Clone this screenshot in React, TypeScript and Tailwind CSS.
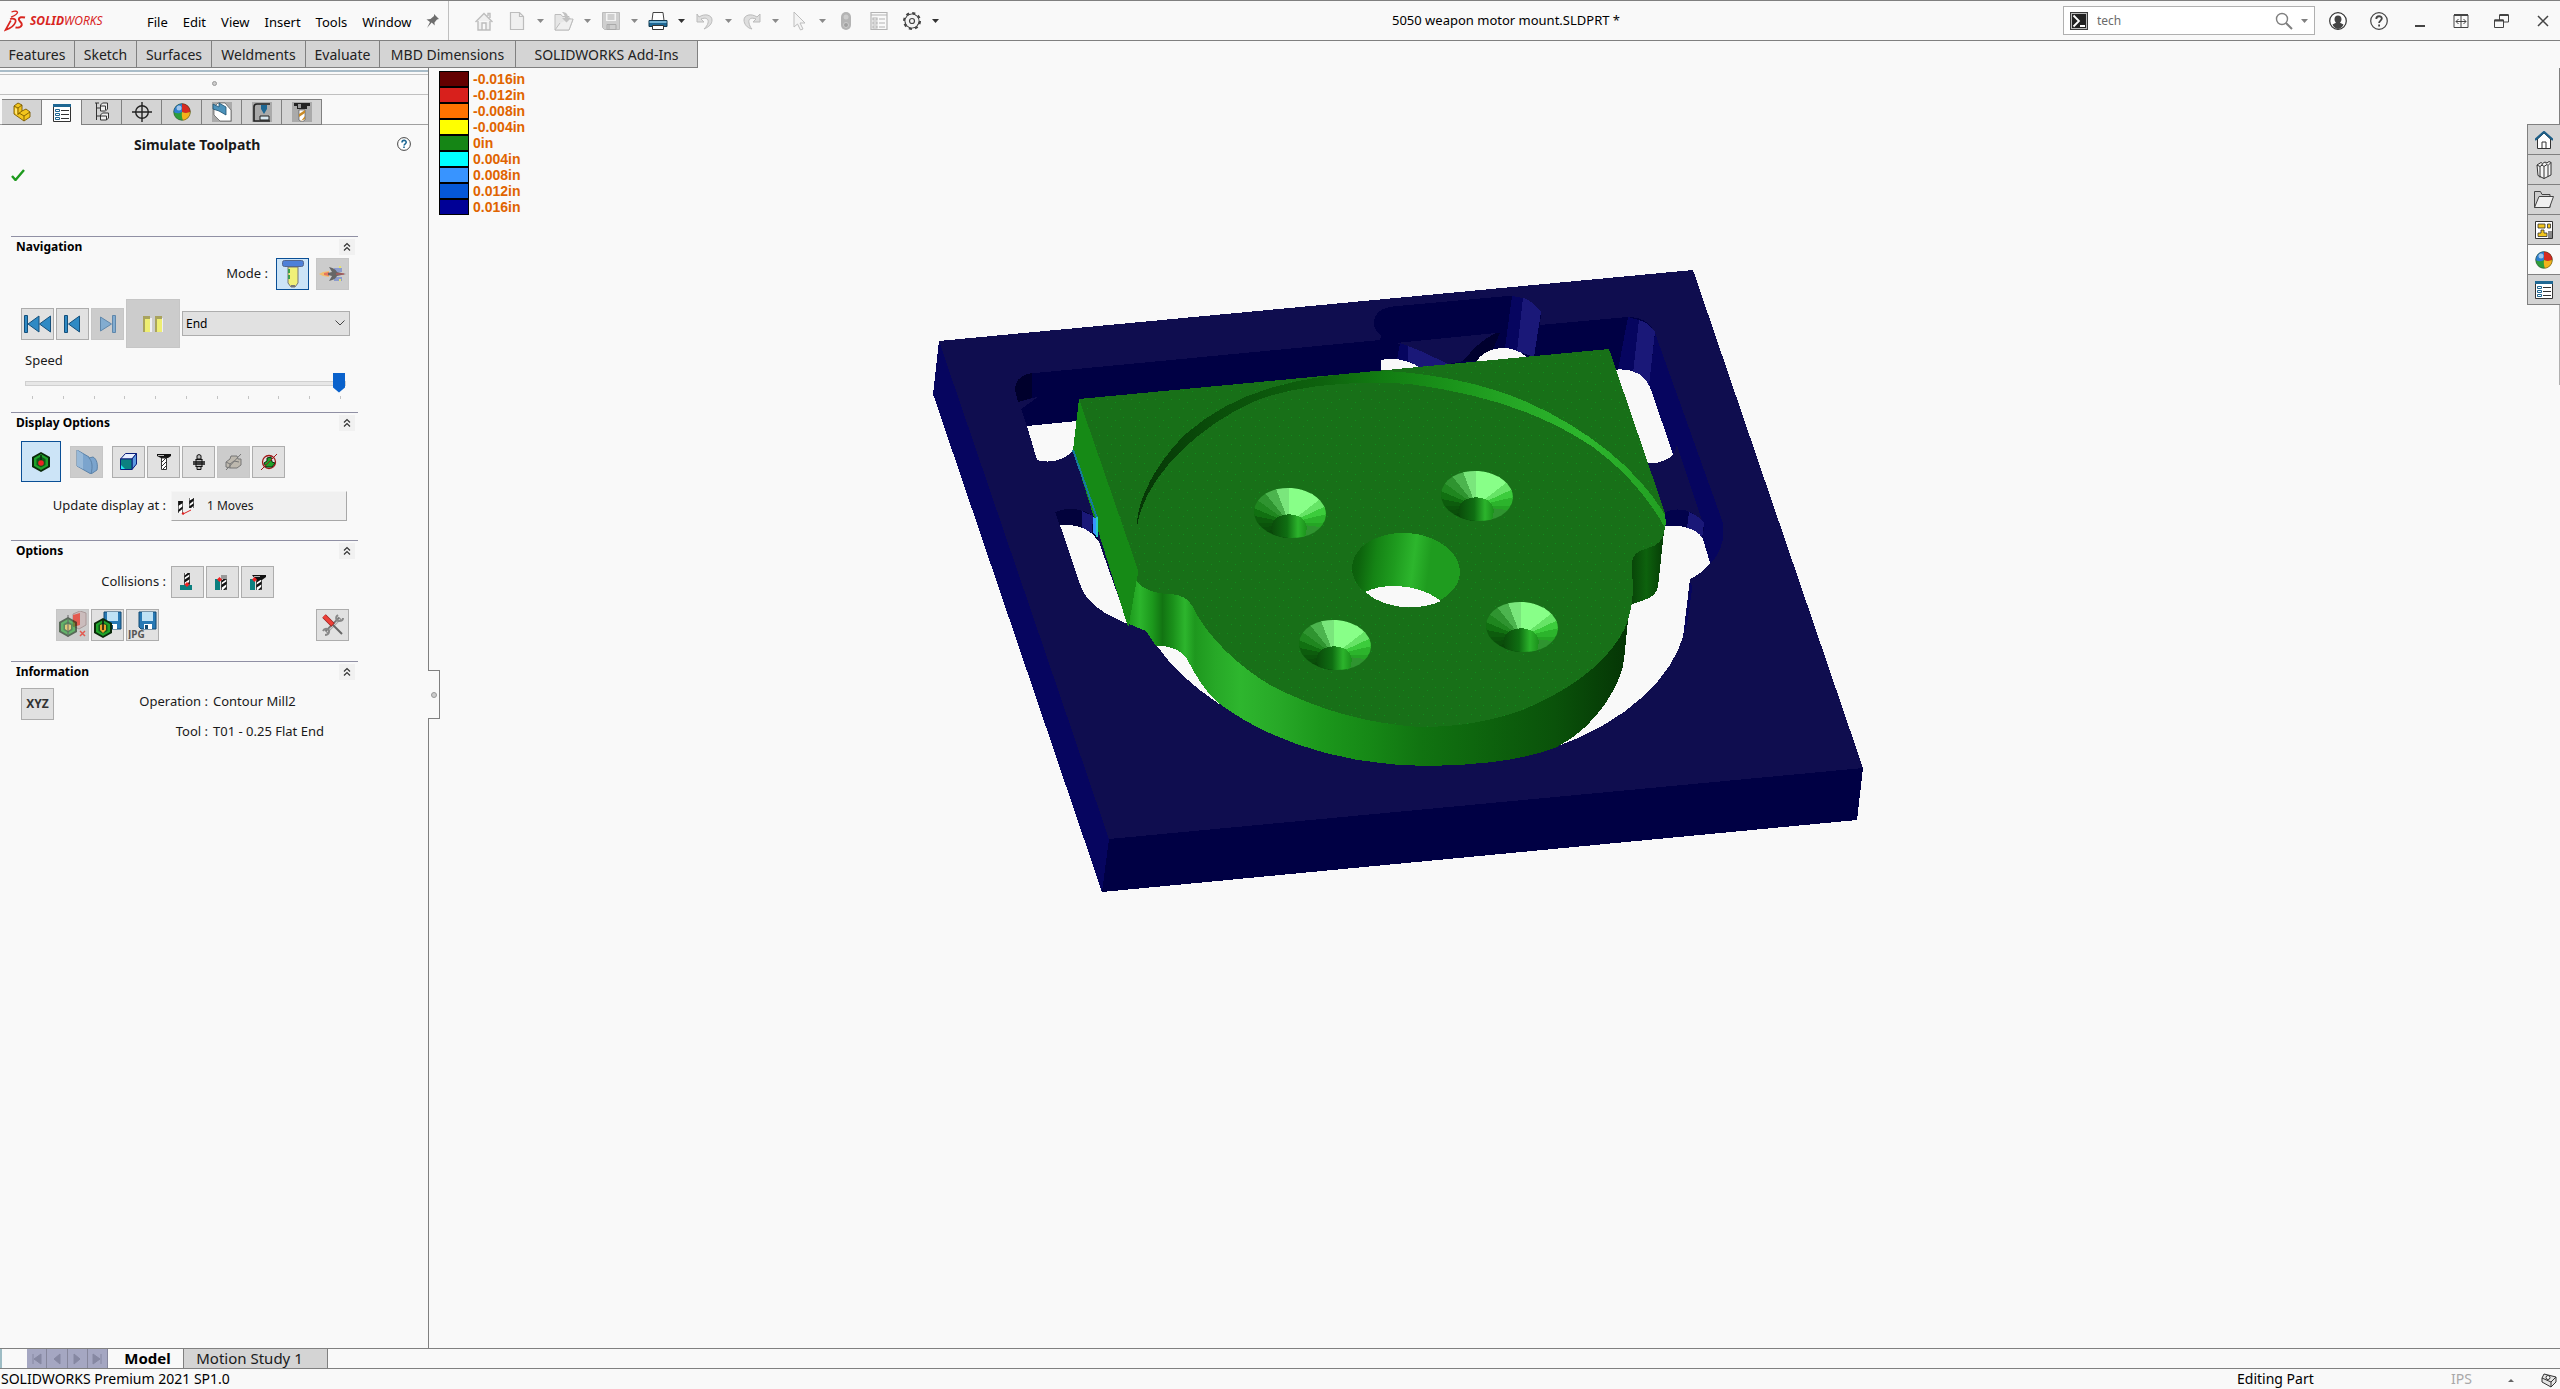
import type { ReactNode } from 'react';

const RIBBON_TABS = [
  { label: 'Features', width: 'w-[75px]' },
  { label: 'Sketch', width: 'w-[62px]' },
  { label: 'Surfaces', width: 'w-[75px]' },
  { label: 'Weldments', width: 'w-[94px]' },
  { label: 'Evaluate', width: 'w-[74px]' },
  { label: 'MBD Dimensions', width: 'w-[136px]' },
  { label: 'SOLIDWORKS Add-Ins', width: 'w-[182px]' },
];

const MENUS = ['File', 'Edit', 'View', 'Insert', 'Tools', 'Window'];

const LEGEND = [
  { color: 'bg-[#640000]', label: '-0.016in' },
  { color: 'bg-[#d8201c]', label: '-0.012in' },
  { color: 'bg-[#ff7300]', label: '-0.008in' },
  { color: 'bg-[#ffff00]', label: '-0.004in' },
  { color: 'bg-[#158515]', label: '0in' },
  { color: 'bg-[#00ffff]', label: '0.004in' },
  { color: 'bg-[#3894ff]', label: '0.008in' },
  { color: 'bg-[#0558d8]', label: '0.012in' },
  { color: 'bg-[#000096]', label: '0.016in' },
];

export default function App() {
  return (
    <div className="flex h-screen flex-col overflow-hidden bg-[#f9f9f9] font-['Noto_Sans',sans-serif] text-[13px] text-[#1a1a1a]">
      <TitleBar />
      <nav className="flex h-[27px] shrink-0 text-[14px] text-[#222]">
        {RIBBON_TABS.map((tab) => (
          <button
            key={tab.label}
            className={`${tab.width} shrink-0 whitespace-nowrap border-r border-b border-[#808080] bg-[#d4d4d4]`}
          >
            {tab.label}
          </button>
        ))}
      </nav>
      <main className="relative flex min-h-0 flex-1">
        <PropertyPanel />
        <Viewport />
        <TaskPane />
      </main>
      <BottomTabs />
      <StatusBar />
    </div>
  );
}

/* ---------- title bar ---------- */

function TitleBar() {
  return (
    <header className="flex h-[41px] shrink-0 items-center border-t border-b border-[#808080]">
      <div className="flex h-full w-[449px] shrink-0 items-center border-r border-[#c0c0c0] pl-1">
        <Logo />
        <nav className="flex gap-[15px] pt-1 text-[13px] text-black">
          {MENUS.map((menu) => (
            <button key={menu}>{menu}</button>
          ))}
        </nav>
        <button aria-label="Pin menu" className="ml-[13px]">
          <svg width="16" height="18" viewBox="0 0 16 18">
            <path d="M9 2l5 5-2 .5-2.500 3 .2 3-3-3L2 16l3-6-3.500-2.500 4-.5L9 4z" fill="#6e6e6e" />
          </svg>
        </button>
      </div>
      <QuickToolbar />
      <div className="flex-1 text-center text-[13px] text-black">
        5050 weapon motor mount.SLDPRT *
      </div>
      <div className="flex h-[29px] w-[252px] items-center border border-[#b0b0b0] bg-white px-1.5">
        <svg width="18" height="18" viewBox="0 0 18 18">
          <rect width="18" height="18" fill="#3a3a3a" />
          <rect x="1.500" y="1.500" width="15" height="15" fill="#222" stroke="#bbb" />
          <path d="M3.500 3.500L9 9l-5.500 5.500M10 14h5" stroke="#fff" strokeWidth="1.800" fill="none" />
        </svg>
        <input
          aria-label="Search commands"
          defaultValue="tech"
          className="ml-[9px] min-w-0 flex-1 bg-transparent text-[12px] text-[#6b6b6b] outline-none"
        />
        <button aria-label="Search">
          <svg width="18" height="18" viewBox="0 0 18 18" fill="none" stroke="#808080">
            <circle cx="7" cy="7" r="5.500" strokeWidth="1.400" />
            <path d="M11 11l6 6" strokeWidth="2" />
          </svg>
        </button>
        <span className="ml-2">
          <Caret color="#808080" />
        </span>
      </div>
      <div className="ml-[14px] mr-2 flex items-center gap-[23px]">
        <button aria-label="Account">
          <svg width="18" height="18" viewBox="0 0 18 18">
            <circle cx="9" cy="9" r="8.300" fill="#fff" stroke="#333" strokeWidth="1.200" />
            <path d="M9 3.500c2.400 0 3.500 1.700 3.500 3.700 0 1.500-.7 2.800-1.500 3.500l3.500 1.800A7.500 7.500 0 0 1 9 17a7.500 7.500 0 0 1-5.500-4.500L7 10.700c-.8-.7-1.500-2-1.500-3.500 0-2 1.100-3.700 3.500-3.700z" fill="#444" />
          </svg>
        </button>
        <button aria-label="Help">
          <svg width="18" height="18" viewBox="0 0 18 18" fill="none" stroke="#444">
            <circle cx="9" cy="9" r="8.300" strokeWidth="1.200" />
            <path d="M6.300 7c0-3.700 5.500-3.500 5.500-.4 0 2-2.700 2-2.700 4.400M9.100 12.400v2" strokeWidth="1.800" />
          </svg>
        </button>
        <button aria-label="Minimize">
          <svg width="18" height="18" viewBox="0 0 18 18">
            <path d="M4 14h10" stroke="#444" strokeWidth="2" />
          </svg>
        </button>
        <button aria-label="Span displays">
          <svg width="18" height="18" viewBox="0 0 18 18" fill="none" stroke="#444">
            <path d="M2 3h14" strokeWidth="2" />
            <path d="M2 3v12.500h14V3M9 3v12.500M4 9.500h10M6.500 7L4 9.500 6.500 12M11.500 7L14 9.500 11.500 12" />
          </svg>
        </button>
        <button aria-label="Restore">
          <svg width="18" height="18" viewBox="0 0 18 18" fill="none" stroke="#444">
            <path d="M1.500 8h9v7.500h-9zM6.500 8V3h9v7h-5" />
            <path d="M1.500 8.500h9M6.500 3h9" strokeWidth="2" />
          </svg>
        </button>
        <button aria-label="Close">
          <svg width="18" height="18" viewBox="0 0 18 18">
            <path d="M4 4l10 10M14 4L4 14" stroke="#444" strokeWidth="1.500" />
          </svg>
        </button>
      </div>
    </header>
  );
}

function Logo() {
  return (
    <div className="flex w-[143px] items-center text-[#d8251f]">
      <svg width="22" height="24" viewBox="0 0 22 24" fill="none" stroke="#d8251f">
        <path d="M7.500 3c3-1.200 6.500-1 6 .6C13 5.500 9.500 7 7 8.200" strokeWidth="1.300" />
        <path d="M6 10c4.500-1 6.500.3 5.300 3.500C10 17 6 19.500 1.500 21l5.300-9.500" strokeWidth="1.700" />
        <path d="M21 8.500c-3.200-.8-6-.2-6.200 1.700-.2 2.200 3.700 3.200 3 5.800-.6 2.200-3.800 2.900-6.300 2.500" strokeWidth="2" />
      </svg>
      <span className="ml-1 text-[12px] italic">
        <b>SOLID</b>WORKS
      </span>
    </div>
  );
}

function Caret({ color }: { color: string }) {
  return (
    <svg width="7" height="4" viewBox="0 0 7 4">
      <path d="M0 0h7L3.500 4z" fill={color} />
    </svg>
  );
}

function ToolButton({ label, caret, children }: { label: string; caret?: string; children: ReactNode }) {
  return (
    <div className="flex items-center">
      <button aria-label={label}>
        <svg width="20" height="20" viewBox="0 0 20 20" fill="none">
          {children}
        </svg>
      </button>
      {caret && (
        <button aria-label={`${label} options`} className="flex w-[27px] justify-center">
          <Caret color={caret} />
        </button>
      )}
    </div>
  );
}

function QuickToolbar() {
  return (
    <div className="ml-[25px] flex shrink-0 items-center">
      <ToolButton label="Home">
        <path d="M1.500 11L10 2.500 18.500 11M4 10v9h12v-9M8 19v-7h4v7M14 5V2.500h2V7" fill="#f0f0f0" stroke="#bdbdbd" strokeWidth="1.400" />
      </ToolButton>
      <span className="w-[13px]" />
      <ToolButton label="New" caret="#8a8a8a">
        <path d="M3.500 1.500h9l4 4v13h-13zM12.500 1.500v4h4" fill="#f0f0f0" stroke="#bdbdbd" strokeWidth="1.200" />
      </ToolButton>
      <ToolButton label="Open" caret="#8a8a8a">
        <path d="M1 3.500h6l1.500 2H15v3h4l-4 10.500H1z" fill="#e6e6e6" stroke="#bdbdbd" />
        <path d="M6 12l-5 7h14l4-11h-3" fill="#f0f0f0" stroke="#bdbdbd" />
        <path d="M8 1c4 0 6 2 6 6h3l-4.500 4.500L8 7h3c0-2-1-4-3-6z" fill="#c2c2c2" />
      </ToolButton>
      <ToolButton label="Save" caret="#8a8a8a">
        <path d="M1.500 1.500h17v17h-15l-2-2z" fill="#cfcfcf" stroke="#bcbcbc" />
        <path d="M5 2h10v8H5z" fill="#f4f4f4" />
        <path d="M6.500 4h7M6.500 6h7M6.500 8h7M6 13.500h9v5H6zM8 14v4" stroke="#aaa" />
      </ToolButton>
      <ToolButton label="Print" caret="#333">
        <path d="M5 1.500h10l1 8H4z" fill="#fff" stroke="#444" />
        <path d="M1 9.500h18v6H1z" fill="#1e6793" stroke="#12384f" />
        <path d="M1.500 10h17v2h-17z" fill="#76b4d5" />
        <path d="M4.500 14.500h11v4h-11z" fill="#fff" stroke="#333" />
      </ToolButton>
      <ToolButton label="Undo" caret="#8a8a8a">
        <path d="M2 3v8h7L6 8c5-2 8 0 7 4-.5 2-2 4-4 6 5-2 8-5 8-9 0-5-7-7-13-3z" fill="#dedede" stroke="#bbb" />
      </ToolButton>
      <ToolButton label="Redo" caret="#8a8a8a">
        <path d="M18 3v8h-7l3-3c-5-2-8 0-7 4 .5 2 1 4 3 6-5-1-8-5-8-9 0-5 7-7 13-3z" fill="#dedede" stroke="#bbb" />
      </ToolButton>
      <ToolButton label="Select" caret="#8a8a8a">
        <path d="M5 1v15l3.500-3 3 6 2.500-1-3-6h5z" fill="#f4f4f4" stroke="#bdbdbd" />
      </ToolButton>
      <ToolButton label="Rebuild">
        <rect x="5" y="1" width="10" height="18" rx="5" fill="#b4b4b4" />
        <circle cx="10" cy="6" r="2.500" fill="#ccc" />
        <circle cx="10" cy="14" r="2.500" fill="#a0a0a0" stroke="#ccc" />
      </ToolButton>
      <span className="w-[13px]" />
      <ToolButton label="File properties">
        <path d="M2 1.500h16v17H2zM2 4h16M4 7h4v2H4zM4 11h4v2H4zM4 15h4v2H4zM10 8h6M10 12h6M10 16h6" stroke="#b4b4b4" strokeWidth="1.200" />
      </ToolButton>
      <span className="w-[13px]" />
      <ToolButton label="Options" caret="#333">
        <circle cx="10" cy="10" r="7" stroke="#444" strokeWidth="1.200" />
        <circle cx="10" cy="10" r="8" stroke="#444" strokeWidth="2" strokeDasharray="3.140 3.140" />
        <circle cx="10" cy="10" r="6.300" fill="#f4f4f4" />
        <circle cx="10" cy="10" r="2.500" stroke="#444" strokeWidth="1.200" />
      </ToolButton>
    </div>
  );
}

/* ---------- shared icons ---------- */

function ListIcon() {
  return (
    <svg width="18" height="18" viewBox="0 0 18 18" fill="none">
      <path d="M.5.5h17v17H.5z" fill="#fff" stroke="#333" />
      <path d="M0 0h18v3H0z" fill="#1e6793" />
      <path d="M2.500 5.500h4v2h-4zM2.500 9.500h4v2h-4zM2.500 13.500h4v2h-4z" stroke="#1e6793" />
      <path d="M8 6.500h8M8 10.500h8M8 14.500h8" stroke="#333" />
    </svg>
  );
}

function BallIcon() {
  return (
    <svg width="18" height="18" viewBox="0 0 18 18">
      <circle cx="9" cy="9" r="8.500" fill="#2e9e3a" />
      <path d="M9 .5A8.500 8.500 0 0 0 .6 9c3 2 6 1.500 8.400 0z" fill="#2c7fd0" />
      <path d="M9 .5A8.500 8.500 0 0 1 17.500 8.500c-3 2-6 2-8.500.5z" fill="#d62a20" />
      <path d="M9 9c3 1.500 6 1.200 8.500-.5A8.500 8.500 0 0 1 10 17.400C9 15 8.500 12 9 9z" fill="#f3b21b" />
      <circle cx="6" cy="5" r="2.500" fill="#fff" opacity=".55" />
      <circle cx="9" cy="9" r="8.300" fill="none" stroke="#333" strokeOpacity=".6" strokeWidth=".7" />
    </svg>
  );
}

function DrillIcon({ x = 0, y = 0 }: { x?: number; y?: number }) {
  return (
    <g transform={`translate(${x} ${y})`}>
      <path d="M0 0h6v14H0z" fill="#fff" />
      <path d="M6 0v3L0 7V5zM6 5v3l-6 4v-3zM6 10v3l-2 1H2z" fill="#111" />
      <path d="M.5 0v14M5.500 0v14" stroke="#333" strokeWidth=".8" />
    </g>
  );
}

/* ---------- property panel ---------- */

const TREE_TABS: { label: string; icon: ReactNode }[] = [
  {
    label: 'FeatureManager',
    icon: (
      <svg width="20" height="20" viewBox="0 0 20 20" stroke="#7a5a00" strokeWidth=".9">
        <path d="M2 4l4-3 4 2v6l4-2 4 3v5l-6 4-10-7z" fill="#f2c51d" />
        <path d="M2 4l4 2 4-3M6 6v7M10 9l-4 3M12 19v-5l6-4M12 14l-5-3" fill="none" />
        <path d="M3 6v5l2 2V7z" fill="#ffe474" stroke="none" />
      </svg>
    ),
  },
  { label: 'PropertyManager', icon: <ListIcon /> },
  {
    label: 'ConfigurationManager',
    icon: (
      <svg width="16" height="20" viewBox="0 0 16 20" fill="#eee" stroke="#333">
        <path d="M1 1h4M2.500 1v17M2.500 6h5M2.500 14h5" fill="none" />
        <path d="M6.500 3l2-2h5v6l-2 2h-5zM6.500 13l2-2h6v5l-2 2h-6z" />
        <path d="M6.500 4h5v4M6.500 14h6v4" fill="none" />
      </svg>
    ),
  },
  {
    label: 'DimXpertManager',
    icon: (
      <svg width="20" height="20" viewBox="0 0 20 20" fill="none" stroke="#222" strokeWidth="1.400">
        <circle cx="10" cy="10" r="6.300" />
        <path d="M10 0v20M0 10h20" />
      </svg>
    ),
  },
  { label: 'DisplayManager', icon: <BallIcon /> },
  {
    label: 'CAM feature tree',
    icon: (
      <svg width="20" height="20" viewBox="0 0 20 20">
        <path d="M0 0h20v20H0z" fill="#aaa" />
        <path d="M2 5l4-4h7l6 7v11H8L2 13z" fill="#fff" stroke="#555" strokeWidth=".7" />
        <path d="M1 2l6 3V1l7 4v8l-7-4-6-2z" fill="#4c92bb" stroke="#1d506e" strokeWidth=".8" />
      </svg>
    ),
  },
  {
    label: 'CAM operation tree',
    icon: (
      <svg width="20" height="20" viewBox="0 0 20 20" fill="none">
        <path d="M0 0h20v20H0z" fill="#aaa" />
        <path d="M18 2H5Q2 2 2 5v14h16" stroke="#222" strokeWidth="1.600" />
        <path d="M9 3h6v4l-3 5-3-5z" fill="#1e6793" />
        <path d="M8 14h9v4H8z" fill="#d9e8f0" stroke="#222" />
      </svg>
    ),
  },
  {
    label: 'CAM tools tree',
    icon: (
      <svg width="20" height="20" viewBox="0 0 20 20">
        <path d="M0 0h20v20H0z" fill="#aaa" />
        <path d="M2 1h16v3H2zM5 4h10v3H5z" fill="#222" />
        <path d="M6 2h3v4H6z" fill="#999" />
        <path d="M7 8h6v10l-3 2-3-2z" fill="#fff" stroke="#444" strokeWidth=".6" />
        <path d="M13 8v3l-6 4v-3zM13 14v3l-4 2z" fill="#c98a25" />
      </svg>
    ),
  },
];

function PropertyPanel() {
  return (
    <aside className="w-[429px] shrink-0 border-r border-[#808080]">
      <div className="flex h-[27px] flex-col items-center border-b border-[#c0c0c0] pt-0.5">
        <div className="h-[5px] w-full border-t-2 border-b border-t-[#a9bcc8] border-b-[#c0c0c0]" />
        <div className="mt-[6px] size-[5px] rounded-full border border-[#999] bg-[#ccc]" />
      </div>
      <div className="mt-1 flex h-[26px] border-b border-[#a0a0a0] pl-0.5">
        {TREE_TABS.map((tab) => (
          <button
            key={tab.label}
            aria-label={tab.label}
            className={`flex h-[26px] w-10 items-center justify-center border-t border-r border-[#808080] ${
              tab.label === 'PropertyManager' ? 'bg-[#f9f9f9]' : 'border-b bg-[#d4d4d4]'
            }`}
          >
            {tab.icon}
          </button>
        ))}
      </div>
      <div className="flex h-[38px] items-center justify-between pl-[134px] pr-[17px]">
        <h1 className="text-[14px] font-bold">Simulate Toolpath</h1>
        <button aria-label="Help">
          <svg width="14" height="14" viewBox="0 0 14 14" fill="none">
            <circle cx="7" cy="7" r="6.400" fill="#fff" stroke="#444" />
            <path d="M5 5.500c0-2.800 4.200-2.700 4.200-.2 0 1.500-2.100 1.500-2.100 3.200M7 9.500v1.500" stroke="#1e6793" strokeWidth="1.600" />
          </svg>
        </button>
      </div>
      <div className="h-[73px] pl-[11px] pt-1">
        <button aria-label="OK">
          <svg width="14" height="12" viewBox="0 0 14 12">
            <path d="M1 7l3.500 4L13 1" stroke="#1e9a1e" strokeWidth="2.400" fill="none" />
          </svg>
        </button>
      </div>
      <div className="ml-[11px] w-[347px]">
        <NavigationSection />
        <DisplaySection />
        <OptionsSection />
        <InformationSection />
      </div>
    </aside>
  );
}

function Section({ title, height, children }: { title: string; height: string; children: ReactNode }) {
  return (
    <section className={`${height} border-t border-[#9090a4]`}>
      <div className="flex h-5 items-center justify-between pl-[5px] pr-[3px]">
        <h2 className="text-[12px] font-bold text-black">{title}</h2>
        <button aria-label={`Collapse ${title}`} className="flex size-4 items-center justify-center bg-[#f1f1f1]">
          <svg width="8" height="10" viewBox="0 0 8 10" fill="none" stroke="#333" strokeWidth="1.200">
            <path d="M1 4.500L4 1.500l3 3M1 8.500l3-3 3 3" />
          </svg>
        </button>
      </div>
      {children}
    </section>
  );
}

function IconButton({ label, look = 'normal', children }: { label: string; look?: 'normal' | 'off' | 'on'; children: ReactNode }) {
  const looks = {
    normal: 'border-[#adadad] bg-[#e1e1e1]',
    off: 'border-[#c6c6c6] bg-[#cccccc]',
    on: 'border-[#0a4f96] bg-[#cce4f7]',
  };
  return (
    <button
      aria-label={label}
      className={`flex h-8 w-[33px] shrink-0 items-center justify-center border ${looks[look]}`}
    >
      {children}
    </button>
  );
}

function NavigationSection() {
  return (
    <Section title="Navigation" height="h-[176px]">
      <div className="mt-px flex items-center justify-end pr-[9px]">
        <span className="mr-2">Mode :</span>
        <IconButton label="Tool mode" look="on">
          <svg width="22" height="28" viewBox="0 0 22 28">
            <path d="M6 7h10v16l-3 4H9l-3-4z" fill="#f0f078" stroke="#777" />
            <path d="M6 9h2v4H6zM6 15h2v4H6z" fill="#3aa04a" />
            <path d="M9 25h4v2H9z" fill="#777" />
            <rect x=".5" y=".5" width="21" height="6" rx="2" fill="#4e80d8" stroke="#55678c" />
          </svg>
        </IconButton>
        <span className="w-[7px]" />
        <IconButton label="Turbo mode" look="off">
          <svg width="28" height="18" viewBox="0 0 28 18">
            <path d="M0 9l4-2 6-1v6l-6-1z" fill="#f0c070" />
            <path d="M5 8l5-1v4l-5-1z" fill="#e8775c" />
            <path d="M15 3h8v4h-8zM15 12h8v4h-8z" fill="#8c9ccc" />
            <path d="M20 1h2v2h-2zM20 14h2v2h-2z" fill="#e6e36a" />
            <path d="M9 8l4-1-3-5c5 1 7 3 8 5l9 2-9 2c-1 2-3 4-8 5l3-5-4-1z" fill="#666" />
            <path d="M17 9h8" stroke="#c55" />
          </svg>
        </IconButton>
      </div>
      <div className="mt-[9px] flex h-[49px] items-center gap-0.5 pl-[10px]">
        <IconButton label="Go to start">
          <svg width="28" height="18" viewBox="0 0 28 18" fill="#2f8ac4" stroke="#15507c">
            <path d="M.5.500h3v17h-3zM15 1v16L4 9zM26.500 1v16l-11-8z" />
          </svg>
        </IconButton>
        <IconButton label="Step back">
          <svg width="17" height="18" viewBox="0 0 17 18" fill="#2f8ac4" stroke="#15507c">
            <path d="M.5.500h3v17h-3zM15.500 1v16L4.500 9z" />
          </svg>
        </IconButton>
        <IconButton label="Step forward" look="off">
          <svg width="17" height="18" viewBox="0 0 17 18" fill="#82acd0" stroke="#5f87ab">
            <path d="M13.500.500h3v17h-3zM1.500 2v14l11-7z" />
          </svg>
        </IconButton>
        <button
          aria-label="Pause"
          className="flex h-[49px] w-[54px] shrink-0 items-center justify-center border border-[#c6c6c6] bg-[#cccccc]"
        >
          <svg width="20" height="16" viewBox="0 0 20 16">
            <path d="M2 2h7v14H2zM14 2h6v14h-6z" fill="#efeff3" />
            <path d="M0 0h7v16H0zM12 0h7v16h-7z" fill="#a9a35e" />
            <path d="M2 3h5v13H2zM14 3h5v13h-5z" fill="#eeee72" />
          </svg>
        </button>
        <div className="relative w-[168px]">
          <select aria-label="Run to" className="h-[25px] w-full appearance-none border border-[#adadad] bg-[#e1e1e1] pl-[3px] text-[12px] text-black">
            <option>End</option>
          </select>
          <svg className="pointer-events-none absolute top-[9px] right-[5px]" width="10" height="6" viewBox="0 0 10 6" fill="none" stroke="#444">
            <path d="M.5.500L5 5l4.500-4.500" />
          </svg>
        </div>
      </div>
      <label htmlFor="speed" className="mt-0.5 block h-5 pl-[14px] leading-5">
        Speed
      </label>
      <div className="w-[335px] pl-[14px]">
        <input
          id="speed"
          type="range"
          min={0}
          max={10}
          defaultValue={10}
          className="my-[3px] block h-5 w-full appearance-none bg-transparent [&::-webkit-slider-runnable-track]:h-[5px] [&::-webkit-slider-runnable-track]:border [&::-webkit-slider-runnable-track]:border-[#d0d0d0] [&::-webkit-slider-runnable-track]:bg-[#e7e7e7] [&::-webkit-slider-thumb]:-mt-[9px] [&::-webkit-slider-thumb]:h-5 [&::-webkit-slider-thumb]:w-3 [&::-webkit-slider-thumb]:appearance-none [&::-webkit-slider-thumb]:bg-[#0a62cc] [&::-webkit-slider-thumb]:[clip-path:polygon(0_0,100%_0,100%_75%,50%_100%,0_75%)]"
        />
        <div className="flex justify-between pl-[7px] pr-[5px]">
          {Array.from({ length: 11 }, (_, i) => (
            <span key={i} className="h-[3px] w-px bg-[#c4c4c4]" />
          ))}
        </div>
      </div>
    </Section>
  );
}

function HexIcon() {
  return (
    <g>
      <path d="M10 0l9 5v10l-9 5-9-5V5z" fill="#0b2a0b" />
      <path d="M10 2l7 4v8l-7 4-7-4V6z" fill="#1fa32a" />
      <path d="M10 4.500l4.500 2.500v6L10 15.500 5.500 13V7z" fill="#0f5a16" />
    </g>
  );
}

function Disk() {
  return (
    <g>
      <path d="M0 0h17v17H2l-2-2z" fill="#2879b4" stroke="#134a72" />
      <path d="M3 0h11v9H3z" fill="#bfe2f5" />
      <path d="M5 12h8v5H5z" fill="#fff" />
      <path d="M6 13h3v4H6z" fill="#134a72" />
    </g>
  );
}

function DisplaySection() {
  return (
    <Section title="Display Options" height="h-[128px]">
      <div className="mt-2 flex h-[41px] items-center gap-0.5 pl-[10px]">
        <button
          aria-label="Stock simulation"
          className="mr-[7px] flex h-[41px] w-10 shrink-0 items-center justify-center border border-[#0a4f96] bg-[#cce4f7]"
        >
          <svg width="20" height="20" viewBox="0 0 20 20">
            <HexIcon />
            <path d="M10 3v8" stroke="#0b2a0b" strokeWidth="1.500" />
            <circle cx="10" cy="11" r="2.800" fill="#e22" />
          </svg>
        </button>
        <IconButton label="Section view" look="off">
          <svg width="22" height="24" viewBox="0 0 22 24">
            <path d="M1 0l12 7v1l4-1c4 2 5 8 4 13l-6 4L1 16z" fill="#7ba4cd" stroke="#5b82a8" />
            <path d="M1 0v16l6 3V4z" fill="#98b9d8" />
            <path d="M13 8c3 3 4 8 2 16" fill="none" stroke="#5b82a8" />
          </svg>
        </IconButton>
        <span className="w-[5px]" />
        <IconButton label="Stock display">
          <svg width="17" height="17" viewBox="0 0 17 17" stroke="#0a1e7a" strokeLinejoin="round">
            <path d="M.5 6l5-5.500h11L12 6z" fill="#e6eeff" />
            <path d="M12 6l4.500-5.500V11L12 16.500z" fill="#5c9ae0" />
            <path d="M.5 6H12v10.500H.5z" fill="#0c8080" />
            <path d="M1 12l4 4H1z" fill="#20e8f0" stroke="none" />
          </svg>
        </IconButton>
        <IconButton label="Tool display">
          <svg width="16" height="16" viewBox="0 0 16 16">
            <path d="M1 0h14v2l-3 2H5L1 2z" fill="#111" />
            <path d="M2 1h6v1H2z" fill="#bbb" />
            <path d="M5.500 4h5v11.500h-5z" fill="#fff" stroke="#333" />
            <path d="M10 4l-4 4M10 8l-4 4M10 12l-3 3" stroke="#333" />
          </svg>
        </IconButton>
        <IconButton label="Holder display">
          <svg width="14" height="16" viewBox="0 0 14 16" fill="#bbb" stroke="#111">
            <path d="M5 1.500Q7-.500 9 1.500V5H5z" />
            <path d="M3.500 5.500h7M3.500 12.500h7M5 12.500h4v3H5z" />
            <path d="M4 5.500h6v7H4z" />
            <path d="M1 8h12M1 10h12" strokeWidth="1.300" />
          </svg>
        </IconButton>
        <IconButton label="Fixture display" look="off">
          <svg width="18" height="16" viewBox="0 0 18 16" fill="none" stroke="#777">
            <path d="M1 8l4-3 1-3h6l1 3h3v6l-4 3H5l-4-1z" fill="#bdb8ae" />
            <path d="M5 10l4-3 5 1M5 14v-4L1 8M16 0L1 16" />
          </svg>
        </IconButton>
        <IconButton label="Target part display">
          <svg width="16" height="16" viewBox="0 0 16 16" fill="none">
            <circle cx="8" cy="8" r="6.500" stroke="#a01818" strokeWidth="1.300" />
            <path d="M3 9l3-2V4l4-1 1 5 3 1-3 4H5z" fill="#1fa32a" stroke="#0b2a0b" />
            <path d="M0 16L16 0" stroke="#a01818" />
          </svg>
        </IconButton>
      </div>
      <div className="mt-[9px] flex items-center">
        <span className="w-[155px] text-right">Update display at :</span>
        <button className="ml-[5px] flex h-[30px] w-[176px] items-center border border-[#f5f5f5] border-r-[#a8a8a8] border-b-[#a8a8a8] bg-[#f0f0f0] pl-[6px] text-[12px]">
          <svg width="17" height="17" viewBox="0 0 17 17">
            <path d="M0 3h5v12H0zM11 0h5v10h-5z" fill="#fff" />
            <path d="M0 3h5v2L0 8zM0 12l5-4v2.500l-5 4zM11 3l5-3v2.500l-5 4zM11 8.500l5-3.500v2.500L13 10h-2z" fill="#111" />
            <path d="M.5 3v12M4.500 3v12M11.500 0v10M15.500 0v10" stroke="#333" strokeWidth=".7" />
            <path d="M5 16l8-4" stroke="#d22" />
            <circle cx="5" cy="15.500" r="1.200" fill="#d22" />
          </svg>
          <span className="ml-3">1 Moves</span>
        </button>
      </div>
    </Section>
  );
}

function OptionsSection() {
  return (
    <Section title="Options" height="h-[121px]">
      <div className="mt-[5px] flex items-center gap-0.5">
        <span className="mr-[3px] w-[155px] text-right">Collisions :</span>
        <IconButton label="Cutting portion collision">
          <svg width="18" height="18" viewBox="0 0 18 18">
            <DrillIcon x={5} y={-2} />
            <path d="M1 12h12v5H1z" fill="#0c8080" />
            <path d="M8 9l2.500 2.500L8 14l-2.500-2.500z" fill="#e22" />
          </svg>
        </IconButton>
        <IconButton label="Shank collision">
          <svg width="18" height="18" viewBox="0 0 18 18">
            <path d="M1 6h5v11H1z" fill="#0c8080" />
            <DrillIcon x={7} y={3} />
            <path d="M7 2h6v4H7z" fill="#999" />
            <path d="M5.500 4l2.500 2.500L5.500 9 3 6.500z" fill="#e22" />
          </svg>
        </IconButton>
        <IconButton label="Holder collision">
          <svg width="18" height="18" viewBox="0 0 18 18">
            <path d="M1 6h5v11H1z" fill="#0c8080" />
            <DrillIcon x={7} y={3} />
            <path d="M3 2h14v2l-4 3H7z" fill="#111" />
            <path d="M5 3h6v1H5z" fill="#aaa" />
            <path d="M5.500 4l2.500 2.500L5.500 9 3 6.500z" fill="#e22" />
          </svg>
        </IconButton>
      </div>
      <div className="mt-[11px] flex items-center gap-0.5 pl-[45px] pr-[9px]">
        <IconButton label="Delete stock" look="off">
          <svg width="30" height="28" viewBox="0 0 30 28">
            <path d="M15 3l7-3 6 2v12l-7 4-6-3z" fill="#cbbcbc" stroke="#a99" />
            <path d="M15 4l7-2v12l-7 2z" fill="#e35a50" />
            <g opacity=".6" transform="translate(0 6)">
              <HexIcon />
              <path d="M7 8l3-1 3 1v4l-3 2-3-2z" fill="#f0c84a" />
            </g>
            <path d="M10 4v22" stroke="#666" />
            <path d="M22 20l5 5M27 20l-5 5" stroke="#e35a50" strokeWidth="1.500" />
          </svg>
        </IconButton>
        <IconButton label="Save stock">
          <svg width="30" height="28" viewBox="0 0 30 28">
            <g transform="translate(11 1)">
              <Disk />
            </g>
            <g transform="translate(0 7)">
              <HexIcon />
              <path d="M7 7l3-1 3 1v5l-3 3-3-3z" fill="#e8a52c" />
            </g>
            <path d="M10 9v10" stroke="#111" strokeWidth="1.500" />
          </svg>
        </IconButton>
        <IconButton label="Save image as JPG">
          <svg width="30" height="28" viewBox="0 0 30 28">
            <g transform="translate(11 1)">
              <Disk />
            </g>
            <text x="0" y="27" fontSize="10" fontWeight="bold" fill="#555">
              JPG
            </text>
          </svg>
        </IconButton>
        <span className="flex-1" />
        <IconButton label="Simulation settings">
          <svg width="22" height="22" viewBox="0 0 22 22" fill="none">
            <path d="M4 18L18 4" stroke="#777" strokeWidth="3.500" />
            <path d="M5 18L18 5" stroke="#ccc" strokeWidth="1.500" />
            <path d="M16 1c-3 2-2 6 1 6 2 0 4-1 4-3M1 17c2-4 7-2 6 1-.5 2-2 3-4 3" stroke="#888" strokeWidth="2" />
            <path d="M11 11l9 9" stroke="#666" strokeWidth="2" />
            <path d="M2 2l9 9" stroke="#982020" strokeWidth="5" />
            <path d="M2 2l8.500 8.500" stroke="#ee4038" strokeWidth="3.500" />
          </svg>
        </IconButton>
      </div>
    </Section>
  );
}

function InformationSection() {
  return (
    <Section title="Information" height="h-[100px]">
      <div className="mt-[6px] flex pl-[10px]">
        <button className="h-8 w-[33px] shrink-0 border border-[#adadad] bg-[#e1e1e1] text-[12px] font-bold text-[#333]">
          XYZ
        </button>
        <dl className="grid grid-cols-[154px_auto] gap-x-[5px] gap-y-[10px] pt-[3px] leading-5">
          <dt className="text-right">Operation :</dt>
          <dd>Contour Mill2</dd>
          <dt className="text-right">Tool :</dt>
          <dd>T01 - 0.25 Flat End</dd>
        </dl>
      </div>
    </Section>
  );
}

/* ---------- graphics area ---------- */

function Viewport() {
  return (
    <div className="relative min-w-0 flex-1">
      <Model />
      <ul className="relative ml-[10px] w-[100px] pt-[3px]">
        {LEGEND.map((item) => (
          <li key={item.label} className="flex h-4 items-center">
            <span className={`h-4 w-[30px] border border-black ${item.color}`} />
            <span className="ml-1 font-['Liberation_Sans',sans-serif] text-[14px] leading-4 font-bold text-[#e06400]">
              {item.label}
            </span>
          </li>
        ))}
      </ul>
      <button
        aria-label="Collapse panel"
        className="absolute top-[602px] -left-px flex h-[49px] w-3 items-center justify-center border border-l-0 border-[#808080] bg-[#f9f9f9]"
      >
        <span className="size-[6px] rounded-full border border-[#999] bg-[#ccc]" />
      </button>
    </div>
  );
}

// Facets of a countersink, clockwise from the right.
const FACETS = [
  '#25a525', '#2f9430', '#2f9430', '#2f9430', '#1a7a1e', '#0c580c', '#063806', '#063806',
  '#083f08', '#094809', '#0a4e0a', '#0b540b', '#0d5c0d', '#117011', '#1f861f', '#2f9430',
  '#4cb44e', '#7ae67c', '#88ff88', '#88ff88', '#88ff88', '#66e466', '#3ccc3c', '#2cb42c',
];

function Countersink({ x, y }: { x: number; y: number }) {
  const point = (i: number) => {
    const angle = (i / FACETS.length) * Math.PI * 2;
    return `${(60 * Math.cos(angle)).toFixed(1)} ${(8 + 42 * Math.sin(angle)).toFixed(1)}`;
  };
  return (
    <g transform={`translate(${x} ${y})`} clipPath="url(#sink)">
      {FACETS.map((color, i) => (
        <path key={i} d={`M-1 10L${point(i - 0.1)}L${point(i + 1.1)}z`} fill={color} />
      ))}
      <path d="M-19 14C-17-3 15-3 17 14L14 30H-14z" fill="url(#bore)" />
    </g>
  );
}

const TOP_FACE =
  'M1079 399L1609 349L1665 513V528C1664 540 1657 546 1648 548C1636 551 1631 556 1632 566L1633 592C1632 612 1626 628 1620 637C1600 670 1560 695 1520 711C1490 721 1460 727 1420 727C1370 724 1320 711 1270 685C1237 665 1212 640 1197 615C1191 602 1186 595 1170 594C1155 594 1144 590 1137 582L1138 570z';

function Model() {
  return (
    <svg className="absolute inset-0 size-full" viewBox="429 68 2098 1280" shapeRendering="crispEdges" role="img" aria-label="Simulated part">
      <defs>
        <clipPath id="sink">
          <ellipse rx="36" ry="25" transform="rotate(4)" />
        </clipPath>
        <linearGradient id="bore">
          <stop offset="0" stopColor="#0a4a0a" />
          <stop offset=".45" stopColor="#0f6e12" />
          <stop offset=".75" stopColor="#2cb42c" />
          <stop offset="1" stopColor="#1b901b" />
        </linearGradient>
        <linearGradient id="wall" gradientUnits="userSpaceOnUse" x1="1130" x2="1630" y1="0" y2="0">
          <stop offset="0" stopColor="#1f9c1f" />
          <stop offset=".02" stopColor="#2cb52c" />
          <stop offset=".045" stopColor="#1c981c" />
          <stop offset=".065" stopColor="#127412" />
          <stop offset=".085" stopColor="#1a8f1a" />
          <stop offset=".11" stopColor="#2db52d" />
          <stop offset=".13" stopColor="#1e981e" />
          <stop offset=".17" stopColor="#27a827" />
          <stop offset=".22" stopColor="#2eb62e" />
          <stop offset=".3" stopColor="#27a827" />
          <stop offset=".38" stopColor="#1c981c" />
          <stop offset=".48" stopColor="#168816" />
          <stop offset=".58" stopColor="#117411" />
          <stop offset=".72" stopColor="#0d620d" />
          <stop offset=".85" stopColor="#0a520a" />
          <stop offset=".93" stopColor="#074207" />
          <stop offset="1" stopColor="#053405" />
        </linearGradient>
        <linearGradient id="groove" gradientUnits="userSpaceOnUse" x1="1137" x2="1666" y1="0" y2="0">
          <stop offset="0" stopColor="#063606" />
          <stop offset=".15" stopColor="#0a4e0a" />
          <stop offset=".35" stopColor="#0e620e" />
          <stop offset=".46" stopColor="#127c12" />
          <stop offset=".6" stopColor="#1b951b" />
          <stop offset=".72" stopColor="#26a826" />
          <stop offset=".85" stopColor="#2db62d" />
          <stop offset="1" stopColor="#229e22" />
        </linearGradient>
        <linearGradient id="center" gradientUnits="userSpaceOnUse" x1="1352" x2="1460" y1="0" y2="6">
          <stop offset="0" stopColor="#063a06" />
          <stop offset=".12" stopColor="#094c09" />
          <stop offset=".35" stopColor="#0d640d" />
          <stop offset=".5" stopColor="#158415" />
          <stop offset=".68" stopColor="#1f9c1f" />
          <stop offset=".85" stopColor="#2db62d" />
          <stop offset="1" stopColor="#1f9c1f" />
        </linearGradient>
        <linearGradient id="notch">
          <stop offset="0" stopColor="#084408" />
          <stop offset=".45" stopColor="#0d620d" />
          <stop offset="1" stopColor="#063a06" />
        </linearGradient>
        <pattern id="grain" width="24" height="18" patternUnits="userSpaceOnUse">
          <path d="M3 3h1v1H3zM11 6h1v1h-1zM19 3h1v1h-1zM7 12h1v1H7zM16 13h1v1h-1z" fill="#128c1c" />
        </pattern>
      </defs>

      {/* stock block */}
      <path d="M939 341L1693 270L1863 768L1109 839z" fill="#0f0d4f" />
      <path d="M939 341L933 394L1102 892L1109 839z" fill="#06055f" />
      <path d="M1109 839L1863 768L1857 820L1102 892z" fill="#000044" />

      {/* pocket walls, left and top */}
      <path d="M1015 390C1015 380 1022 374 1035 373L1380 340H1400L1390 380L1079 421L1027 426L1021 408L1037 397L1018 402z" fill="#000044" />
      <path d="M1015 390C1015 380 1022 374 1032 373V398L1018 402z" fill="#00002c" />
      <path d="M1019 403L1038 397L1021 409z" fill="#0f0d4f" />
      <path d="M1374 323C1374 312 1383 307 1397 306L1507 296C1522 295 1535 303 1541 314L1540 325L1627 317C1640 316 1650 322 1655 333L1649 386H1600L1534 360L1460 372L1375 372L1381 335C1376 332 1374 328 1374 323z" fill="#000044" />
      <path d="M1396 343L1496 333C1485 338 1475 346 1463 361L1448 364L1423 352z" fill="#0f0d4f" />
      <path d="M1496 333C1485 338 1475 346 1463 361L1477 361L1493 349L1500 333z" fill="#00002e" />
      <path d="M1400 343L1408 346V362L1397 360z" fill="#06055f" />
      <path d="M1408 346L1423 352L1448 364L1420 368L1408 361z" fill="#1a1878" />
      <path d="M1512 296L1523 298L1517 351L1505 348z" fill="#06055f" />
      <path d="M1523 298C1530 300 1536 305 1541 312L1534 357L1517 351z" fill="#1a1878" />
      <path d="M1628 317L1639 320L1633 373L1618 370z" fill="#06055f" />
      <path d="M1639 320C1646 322 1651 326 1655 332L1649 385L1633 373z" fill="#1a1878" />

      {/* right-hand wall and the slots below it */}
      <path d="M1655 333L1723 523C1725 542 1720 554 1710 564L1703 538L1703 523L1677 445L1673 455L1649 385z" fill="#06055f" />
      <path d="M1665 512C1680 506 1696 511 1704 524L1703 539L1687 528L1664 527z" fill="#02024c" />
      <path d="M1689 512C1695 514 1700 518 1704 523L1702 539L1687 528z" fill="#1a1878" />
      <path d="M1055 512C1070 506 1086 509 1097 519L1098 540L1083 528L1060 526z" fill="#02023c" />
      <path d="M1082 511L1093 516L1092 533L1082 528z" fill="#1a1878" />

      {/* through openings */}
      <g fill="#f9f9f9">
        <path d="M1027 426L1077 421L1073 450C1066 460 1050 464 1037 460z" />
        <path d="M1060 525C1078 523 1092 530 1099 542L1128 624C1106 615 1086 604 1080 584z" />
        <path d="M1157 646C1170 645 1181 650 1187 659L1219 704C1192 686 1171 666 1157 646z" />
        <path d="M1381 372V360C1394 357 1410 360 1422 369z" />
        <path d="M1475 363C1485 346 1511 342 1528 358z" />
        <path d="M1614 370C1632 367 1645 375 1650 387L1673 454C1668 461 1658 464 1645 463z" />
        <path d="M1660 526H1680C1692 528 1700 533 1703 539L1710 563C1705 570 1698 575 1690 579L1683 637C1672 675 1630 722 1550 749L1600 600z" />
      </g>
      <path d="M1691 579L1683 637L1687 625L1692 590z" fill="#06055f" />

      {/* green part: side faces */}
      <path d="M1079 399L1073 450L1128 627L1140 600L1138 570z" fill="#168a16" />
      <path d="M1137 578L1129 624L1146 631L1156 646C1170 645 1181 650 1187 659C1196 676 1204 690 1217 702C1270 742 1345 766 1430 766C1480 765 1525 760 1557 747C1600 725 1622 680 1624 660L1630 600L1420 640L1190 590z" fill="url(#wall)" />
      <path d="M1631 550L1665 522L1658 587C1655 600 1640 600 1631 605z" fill="url(#notch)" />
      <path d="M1073 450L1097 518" stroke="#147c9a" strokeWidth="2" />
      <path d="M1093 517l4 2v18l-4-4z" fill="#3894ff" />
      <path d="M1096 517h2v20h-2z" fill="#28c8c8" />

      {/* green part: top face */}
      <path d={TOP_FACE} fill="#187018" />
      <path d={TOP_FACE} fill="url(#grain)" />
      <path
        d="M1137 527C1136 500 1158 460 1187 433C1232 394 1290 375 1387 371C1440 374 1490 386 1527 402C1590 430 1640 472 1665 515L1666 522L1665 528C1650 500 1625 470 1593 447C1545 415 1490 395 1410 384C1350 380 1290 386 1253 402C1195 428 1143 480 1137 527z"
        fill="url(#groove)"
      />
      <ellipse cx="1406" cy="570" rx="54" ry="37" transform="rotate(4 1406 570)" fill="url(#center)" />
      <path d="M1365 592C1385 582 1420 584 1441 601C1420 611 1385 610 1365 592z" fill="#f9f9f9" />
      <Countersink x={1290} y={513} />
      <Countersink x={1477} y={496} />
      <Countersink x={1335} y={645} />
      <Countersink x={1522} y={627} />
    </svg>
  );
}

/* ---------- task pane ---------- */

const TASKS: { label: string; icon: ReactNode }[] = [
  {
    label: 'Resources',
    icon: (
      <svg width="18" height="18" viewBox="0 0 18 18" fill="none">
        <path d="M2.500 8v9.500h13V8L9 2z" fill="#fff" stroke="#333" />
        <path d="M7 17v-6h4v6" stroke="#333" />
        <path d="M0 9l9-8 9 8" stroke="#1e5f88" strokeWidth="2.200" />
      </svg>
    ),
  },
  {
    label: 'Design library',
    icon: (
      <svg width="18" height="18" viewBox="0 0 18 18" fill="#f4f4f4" stroke="#333">
        <path d="M2 4l4-2.500 1.500 1L10 1l2 1 2-1.500 2 1V14l-7 3.500-6-3z" />
        <path d="M2 4l3 1.500v11M5 5.500l3-2M6.500 3.500l2.500 2v12M9 5.500l3-2M11 2.500l2 2v11M13 4.500l3-3" fill="none" />
      </svg>
    ),
  },
  {
    label: 'File explorer',
    icon: (
      <svg width="20" height="17" viewBox="0 0 20 17" stroke="#444">
        <path d="M.5.500h6l1.500 3h8v13H.5z" fill="#ccc" />
        <path d="M5 5.500h14.500l-4 11H.5z" fill="#f0f0f0" />
      </svg>
    ),
  },
  {
    label: 'View palette',
    icon: (
      <svg width="18" height="18" viewBox="0 0 18 18">
        <path d="M.5.500h17v17H.5z" fill="#fff" stroke="#333" />
        <path d="M3 3h7v4H3zM12.500 3h3v4h-3zM6 9h3v3h3v3.500H3V12h3z" fill="#f2c51d" stroke="#333" strokeWidth=".8" />
        <path d="M13 10h4v7h-4z" fill="#888" />
      </svg>
    ),
  },
  { label: 'Appearances', icon: <BallIcon /> },
  { label: 'Custom properties', icon: <ListIcon /> },
];

function TaskPane() {
  return (
    <div className="flex w-[33px] shrink-0 flex-col">
      <div className="h-14 border-r border-[#808080]" />
      <div className="flex flex-col border-t border-l border-[#808080]">
        {TASKS.map((task) => (
          <button
            key={task.label}
            aria-label={task.label}
            className={`flex h-[30px] items-center justify-center border-b border-[#808080] ${
              task.label === 'Appearances' ? 'bg-[#f9f9f9]' : 'bg-[#d4d4d4]'
            }`}
          >
            {task.icon}
          </button>
        ))}
      </div>
      <div className="h-20 border-r border-[#b0b0b0]" />
    </div>
  );
}

/* ---------- bottom ---------- */

const STEPS = [
  { label: 'First tab', d: 'M2 1v10M10 1v10L3 6z' },
  { label: 'Previous tab', d: 'M9 1v10L3 6z' },
  { label: 'Next tab', d: 'M3 1v10l6-5z' },
  { label: 'Last tab', d: 'M10 1v10M2 1v10l7-5z' },
];

function BottomTabs() {
  return (
    <div className="flex h-[21px] shrink-0 border-t border-b border-[#808080] text-[15px]">
      <span className="w-[2px] bg-[#9dbcc4]" />
      <div className="ml-[25px] flex w-[81px] bg-[#9697ae]">
        {STEPS.map((step) => (
          <button key={step.label} aria-label={step.label} className="flex flex-1 items-center justify-center border-r border-[#85869c] bg-[#a5a7c2]">
            <svg width="12" height="12" viewBox="0 0 12 12" fill="#8688a2" stroke="#8688a2">
              <path d={step.d} />
            </svg>
          </button>
        ))}
      </div>
      <button className="w-[75px] pl-1 leading-[19px] font-bold text-black">Model</button>
      <button className="w-[145px] border-r border-l border-[#808080] bg-[#d4d4d4] pr-3 leading-[19px]">
        Motion Study 1
      </button>
    </div>
  );
}

function StatusBar() {
  return (
    <footer className="flex h-5 shrink-0 items-start pl-px text-[14px] leading-5 text-black">
      <span>SOLIDWORKS Premium 2021 SP1.0</span>
      <span className="flex-1" />
      <span className="w-[214px]">Editing Part</span>
      <span className="w-[57px] text-[#a8a8a8]">IPS</span>
      <svg className="mt-[10px] mr-[27px]" width="6" height="3" viewBox="0 0 6 3">
        <path d="M0 3h6L3 0z" fill="#666" />
      </svg>
      <svg className="mt-1 mr-[3px] shrink-0" width="16" height="15" viewBox="0 0 16 15" fill="#e4e4e4" stroke="#333">
        <path d="M1 5l2-4 12 3v5l-5 5-9-5z" />
        <path d="M1 5l9 4 5-5M10 9v5" fill="none" />
        <circle cx="7" cy="4.500" r="2" fill="#fff" />
      </svg>
    </footer>
  );
}
